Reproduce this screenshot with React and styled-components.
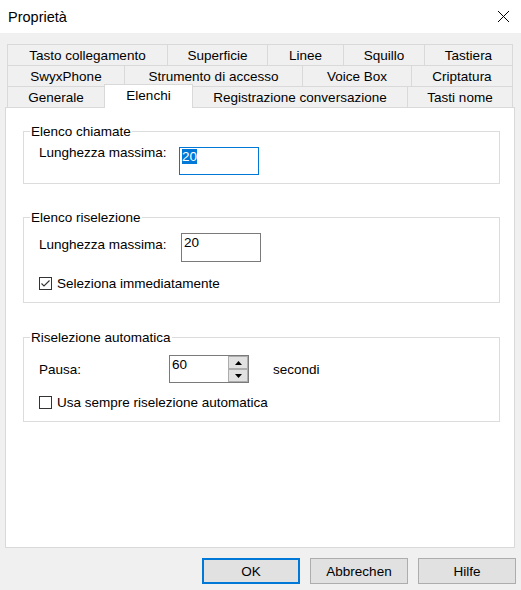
import React from "react";
import styled, { createGlobalStyle } from "styled-components";

const GlobalStyle = createGlobalStyle`
  html, body {
    margin: 0;
    padding: 0;
    background: #f0f0f0;
  }
  body {
    font-family: "Liberation Sans", Arial, sans-serif;
    font-size: 13.5px;
    color: #000;
  }
  * { box-sizing: border-box; }
`;

const Window = styled.div`
  width: 521px;
  height: 590px;
  display: flex;
  flex-direction: column;
  background: #f0f0f0;
  overflow: hidden;
`;

const TitleBar = styled.div`
  height: 33px;
  flex-shrink: 0;
  background: #fff;
  display: flex;
  align-items: center;
  justify-content: space-between;
  padding: 0 11px 0 8px;
`;

const Title = styled.span`
  font-size: 14.5px;
  color: #000;
`;

const CloseButton = styled.span`
  display: flex;
  width: 13px;
  height: 13px;
`;

const Body = styled.div`
  padding: 11px 6px 0 5px;
  display: flex;
  flex-direction: column;
`;

const Tabs = styled.div`
  margin-left: 2px;
  width: 506px;
  display: flex;
  flex-direction: column;
`;

const TabRow = styled.div`
  display: flex;
  height: 21px;
`;

const Tab = styled.div`
  width: ${(p) => p.$w}px;
  height: 21px;
  flex-shrink: 0;
  display: flex;
  align-items: center;
  justify-content: center;
  white-space: nowrap;
  background: #f0f0f0;
  border-top: 1px solid #d9d9d9;
  border-left: 1px solid #d9d9d9;
  &:last-child {
    border-right: 1px solid #d9d9d9;
  }
`;

const ActiveTab = styled(Tab)`
  position: relative;
  z-index: 1;
  height: 24px;
  margin-top: -2px;
  margin-right: -1px;
  padding-bottom: 2px;
  background: #fff;
  border-right: 1px solid #d9d9d9;
`;

const Panel = styled.div`
  height: 441px;
  background: #fff;
  border: 1px solid #d9d9d9;
  padding: 0 14px 0 17px;
  display: flex;
  flex-direction: column;
`;

const Group = styled.fieldset`
  margin: ${(p) => p.$top}px 0 0 0;
  padding: 0;
  min-width: 0;
  height: ${(p) => p.$h}px;
  border: 1px solid #dcdcdc;
`;

const Caption = styled.legend`
  margin-left: 6px;
  padding: 0 1px;
  line-height: 15px;
  font-size: 13.5px;
`;

const GroupContent = styled.div`
  padding: ${(p) => p.$pt}px 15px 0 15px;
  display: flex;
  flex-direction: column;
`;

const FieldRow = styled.div`
  display: flex;
  align-items: flex-start;
`;

const FieldLabel = styled.span`
  flex-shrink: 0;
  width: ${(p) => p.$w}px;
  margin-top: ${(p) => p.$dy}px;
  line-height: 15px;
  white-space: nowrap;
`;

const Unit = styled.span`
  margin-left: 24px;
  margin-top: ${(p) => p.$dy}px;
  line-height: 15px;
`;

const TextField = styled.div`
  width: 80px;
  height: ${(p) => p.$h}px;
  background: #fff;
  border: 1px solid ${(p) => (p.$focused ? "#0078d7" : "#7a7a7a")};
  padding: 1px 2px;
  line-height: 15px;
  display: flex;
  align-items: flex-start;
`;

const Selected = styled.span`
  background: #0078d7;
  color: #fff;
`;

const SpinField = styled.div`
  width: 80px;
  height: 28px;
  background: #fff;
  border: 1px solid #7a7a7a;
  display: flex;
`;

const SpinText = styled.span`
  flex: 1;
  padding: 1px 2px;
  line-height: 15px;
`;

const SpinButtons = styled.div`
  width: 20px;
  display: flex;
  flex-direction: column;
`;

const SpinButton = styled.div`
  height: 13px;
  background: #e1e1e1;
  border: 1px solid #adadad;
  display: flex;
  align-items: center;
  justify-content: center;
`;

const CheckRow = styled.label`
  display: flex;
  align-items: center;
  margin-top: ${(p) => p.$top}px;
  line-height: 15px;
  white-space: nowrap;
`;

const CheckBox = styled.span`
  width: 13px;
  height: 13px;
  flex-shrink: 0;
  border: 1px solid #333;
  background: #fff;
  display: flex;
  align-items: center;
  justify-content: center;
  margin-right: 5px;
`;

const ButtonBar = styled.div`
  display: flex;
  justify-content: flex-end;
  gap: 10px;
  padding: 10px 5px 0 0;
`;

const DialogButton = styled.button`
  width: 98px;
  height: 26px;
  margin: 0;
  padding: 0;
  font-family: "Liberation Sans", Arial, sans-serif;
  font-size: 13.5px;
  color: #000;
  background: #e1e1e1;
  border: ${(p) => (p.$default ? "2px solid #0078d7" : "1px solid #adadad")};
`;

const CloseIcon = () => (
  <svg width="13" height="13" viewBox="0 0 13 13">
    <path d="M1 1 L12 12 M12 1 L1 12" stroke="#000" strokeWidth="1" fill="none" />
  </svg>
);

const CheckMark = () => (
  <svg width="11" height="11" viewBox="0 0 11 11">
    <path d="M1.5 5.5 L4 8 L9.5 2.5" stroke="#333" strokeWidth="1.1" fill="none" />
  </svg>
);

const Arrow = ({ up }) => (
  <svg width="7" height="4" viewBox="0 0 7 4">
    <polygon points={up ? "0,4 7,4 3.5,0" : "0,0 7,0 3.5,4"} fill="#000" />
  </svg>
);

const Check = ({ checked, children, top }) => (
  <CheckRow $top={top}>
    <CheckBox>{checked && <CheckMark />}</CheckBox>
    {children}
  </CheckRow>
);

const tabRows = [
  [
    ["Tasto collegamento", 160],
    ["Superficie", 100],
    ["Linee", 76],
    ["Squillo", 81],
    ["Tastiera", 89],
  ],
  [
    ["SwyxPhone", 117],
    ["Strumento di accesso", 178],
    ["Voice Box", 109],
    ["Criptatura", 102],
  ],
  [
    ["Generale", 97],
    ["Elenchi", 89, true],
    ["Registrazione conversazione", 215],
    ["Tasti nome", 106],
  ],
];

export default function App() {
  return (
    <>
      <GlobalStyle />
      <Window>
        <TitleBar>
          <Title>Proprietà</Title>
          <CloseButton>
            <CloseIcon />
          </CloseButton>
        </TitleBar>

        <Body>
          <Tabs>
            {tabRows.map((row, i) => (
              <TabRow key={i}>
                {row.map(([label, w, active]) =>
                  active ? (
                    <ActiveTab key={label} $w={w}>
                      {label}
                    </ActiveTab>
                  ) : (
                    <Tab key={label} $w={w}>
                      {label}
                    </Tab>
                  )
                )}
              </TabRow>
            ))}
          </Tabs>

          <Panel>
            <Group $top={16} $h={60}>
              <Caption>Elenco chiamate</Caption>
              <GroupContent $pt={8}>
                <FieldRow>
                  <FieldLabel $w={140} $dy={-2}>
                    Lunghezza massima:
                  </FieldLabel>
                  <TextField $h={28} $focused>
                    <Selected>20</Selected>
                  </TextField>
                </FieldRow>
              </GroupContent>
            </Group>

            <Group $top={26} $h={93}>
              <Caption>Elenco riselezione</Caption>
              <GroupContent $pt={8}>
                <FieldRow>
                  <FieldLabel $w={142} $dy={4}>
                    Lunghezza massima:
                  </FieldLabel>
                  <TextField $h={29}>20</TextField>
                </FieldRow>
                <Check checked top={14}>
                  Seleziona immediatamente
                </Check>
              </GroupContent>
            </Group>

            <Group $top={27} $h={92}>
              <Caption>Riselezione automatica</Caption>
              <GroupContent $pt={10}>
                <FieldRow>
                  <FieldLabel $w={130} $dy={7}>
                    Pausa:
                  </FieldLabel>
                  <SpinField>
                    <SpinText>60</SpinText>
                    <SpinButtons>
                      <SpinButton>
                        <Arrow up />
                      </SpinButton>
                      <SpinButton>
                        <Arrow />
                      </SpinButton>
                    </SpinButtons>
                  </SpinField>
                  <Unit $dy={7}>secondi</Unit>
                </FieldRow>
                <Check top={12}>Usa sempre riselezione automatica</Check>
              </GroupContent>
            </Group>
          </Panel>
        </Body>

        <ButtonBar>
          <DialogButton $default>OK</DialogButton>
          <DialogButton>Abbrechen</DialogButton>
          <DialogButton>Hilfe</DialogButton>
        </ButtonBar>
      </Window>
    </>
  );
}
